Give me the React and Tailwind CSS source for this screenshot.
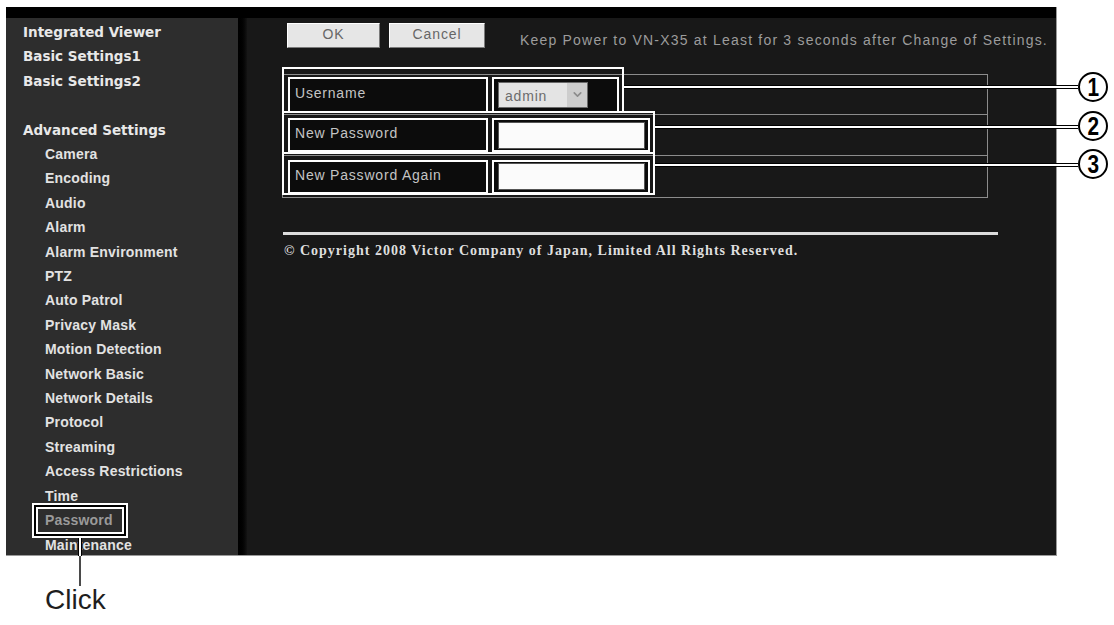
import React from "react";
import { ChevronDown } from "lucide-react";

const topItems = ["Integrated Viewer", "Basic Settings1", "Basic Settings2"];

const subItems = [
  "Camera",
  "Encoding",
  "Audio",
  "Alarm",
  "Alarm Environment",
  "PTZ",
  "Auto Patrol",
  "Privacy Mask",
  "Motion Detection",
  "Network Basic",
  "Network Details",
  "Protocol",
  "Streaming",
  "Access Restrictions",
  "Time",
  "Password",
  "Maintenance",
];

const Callout = ({ n, top }) => (
  <div
    className="absolute left-[1078px] flex h-[30px] w-[30px] items-center justify-center rounded-full border-2 border-black bg-white"
    style={{ top }}
  >
    <span className="scale-x-[.8] text-[26px] font-bold leading-none text-black">{n}</span>
  </div>
);

const App = () => {
  return (
    <div className="relative h-[625px] w-[1114px] overflow-hidden bg-white pl-[6px] pt-[7px] font-['Liberation_Sans',Arial,sans-serif]">
      {/* the captured browser window */}
      <div className="flex h-[549px] w-[1051px] flex-col border-b border-r border-[#9a9a9a] bg-black">
        <div className="h-[11px] shrink-0 bg-black" />
        <div className="flex min-h-0 flex-1">
          {/* menu */}
          <nav className="w-[232px] shrink-0 overflow-hidden bg-[#2d2d2d] pl-[17px] pt-[2px] leading-[24.4px] text-[#e8e8e8]">
            {topItems.map((t) => (
              <div key={t} className="font-['DejaVu_Sans',sans-serif] text-[13.5px] font-bold">
                {t}
              </div>
            ))}
            <div className="h-[24.4px]" />
            <div className="font-['DejaVu_Sans',sans-serif] text-[13.5px] font-bold">Advanced Settings</div>
            {subItems.map((s) => (
              <div
                key={s}
                className={`whitespace-nowrap pl-[22px] text-[14px] font-bold tracking-[0.2px] ${
                  s === "Password" ? "text-[#9a9a9a]" : "text-[#e2e2e2]"
                }`}
              >
                {s}
              </div>
            ))}
          </nav>

          <div className="w-[9px] shrink-0 bg-linear-to-r from-black to-[#141414]" />

          {/* settings page */}
          <main className="flex-1 bg-[#181818] pl-[40px] pt-[5px]">
            <div className="flex items-start">
              <button className="h-[25px] w-[93px] border border-b-[#7a7a7a] border-l-white border-r-[#7a7a7a] border-t-white bg-[#e6e6e6] pb-[3px] text-[14px] tracking-[0.9px] text-[#666]">
                OK
              </button>
              <button className="ml-[9px] h-[25px] w-[96px] border border-b-[#7a7a7a] border-l-white border-r-[#7a7a7a] border-t-white bg-[#e6e6e6] pb-[3px] text-[14px] tracking-[0.9px] text-[#666]">
                Cancel
              </button>
              <p className="ml-[35px] whitespace-nowrap pt-[8px] text-[14px] leading-[18px] tracking-[1.2px] text-[#9c9c9c]">
                Keep Power to VN-X35 at Least for 3 seconds after Change of Settings.
              </p>
            </div>

            <div className="ml-[-5px] mt-[25px] w-[706px] border border-[#8c8c8c] text-[14px] tracking-[0.8px] text-[#c4c4c4]">
              <div className="flex h-[40px] items-center gap-[4px] border-b border-[#8c8c8c] pl-[5px]">
                <div className="flex h-[36px] w-[200px] items-center border-2 border-white bg-[#0c0c0c] pb-[3px] pl-[5px]">
                  Username
                </div>
                <div className="flex h-[36px] w-[127px] items-center border-2 border-white bg-[#0c0c0c] pl-[4px]">
                  <div className="flex h-[26px] w-[90px] border border-[#6a6a6a] bg-[#e4e4e4]">
                    <span className="flex-1 pl-[6px] pt-[3px] text-[#6c6c6c]">admin</span>
                    <span className="flex w-[20px] items-center justify-center bg-[#cdcdcd]">
                      <ChevronDown size={13} strokeWidth={3} color="#8c8c8c" />
                    </span>
                  </div>
                </div>
              </div>
              <div className="flex h-[41px] items-center gap-[4px] border-b border-[#8c8c8c] pl-[5px]">
                <div className="flex h-[34px] w-[200px] items-center border-2 border-white bg-[#0c0c0c] pb-[3px] pl-[5px]">
                  New Password
                </div>
                <div className="flex h-[34px] w-[158px] items-center border-2 border-white bg-[#0c0c0c] pl-[4px]">
                  <div className="h-[27px] w-[147px] border border-[#555] bg-[#fbfbfb]" />
                </div>
              </div>
              <div className="flex h-[41px] items-center gap-[4px] pl-[5px]">
                <div className="flex h-[34px] w-[200px] items-center border-2 border-white bg-[#0c0c0c] pb-[3px] pl-[5px]">
                  New Password Again
                </div>
                <div className="flex h-[34px] w-[158px] items-center border-2 border-white bg-[#0c0c0c] pl-[4px]">
                  <div className="h-[27px] w-[147px] border border-[#555] bg-[#fbfbfb]" />
                </div>
              </div>
            </div>

            <div className="ml-[-4px] mt-[34px] h-[3px] w-[715px] bg-[#dcdcdc]" />
            <p className="ml-[-3px] mt-[7px] whitespace-nowrap font-['Liberation_Serif',serif] text-[14px] font-bold leading-[18px] tracking-[1px] text-[#dedede]">
              © Copyright 2008 Victor Company of Japan, Limited All Rights Reserved.
            </p>
          </main>
        </div>
      </div>

      {/* manual annotations drawn over the capture */}
      <div className="absolute left-[282px] top-[67px] h-[46px] w-[342px] border-2 border-white" />
      <div className="absolute left-[282px] top-[111px] h-[43px] w-[373px] border-2 border-white" />
      <div className="absolute left-[282px] top-[152px] h-[43px] w-[373px] border-2 border-white" />

      <div className="absolute left-[624px] top-[85px] h-[4px] w-[454px] border-y border-black bg-white" />
      <div className="absolute left-[655px] top-[125px] h-[4px] w-[423px] border-y border-black bg-white" />
      <div className="absolute left-[655px] top-[163px] h-[4px] w-[423px] border-y border-black bg-white" />

      <Callout n="1" top={72} />
      <Callout n="2" top={111} />
      <Callout n="3" top={149} />

      <div className="absolute left-[32px] top-[503px] h-[35px] w-[96px] border-2 border-white">
        <div className="h-full w-full border-2 border-black">
          <div className="h-full w-full border-2 border-white" />
        </div>
      </div>
      <div className="absolute left-[78px] top-[538px] h-[18px] w-[4px] border-x border-black bg-white" />
      <div className="absolute left-[79px] top-[556px] h-[30px] w-[2px] bg-[#4a4a4a]" />
      <div className="absolute left-[45px] top-[586px] text-[28px] leading-none text-[#1e1e1e]">Click</div>
    </div>
  );
};

export default App;
